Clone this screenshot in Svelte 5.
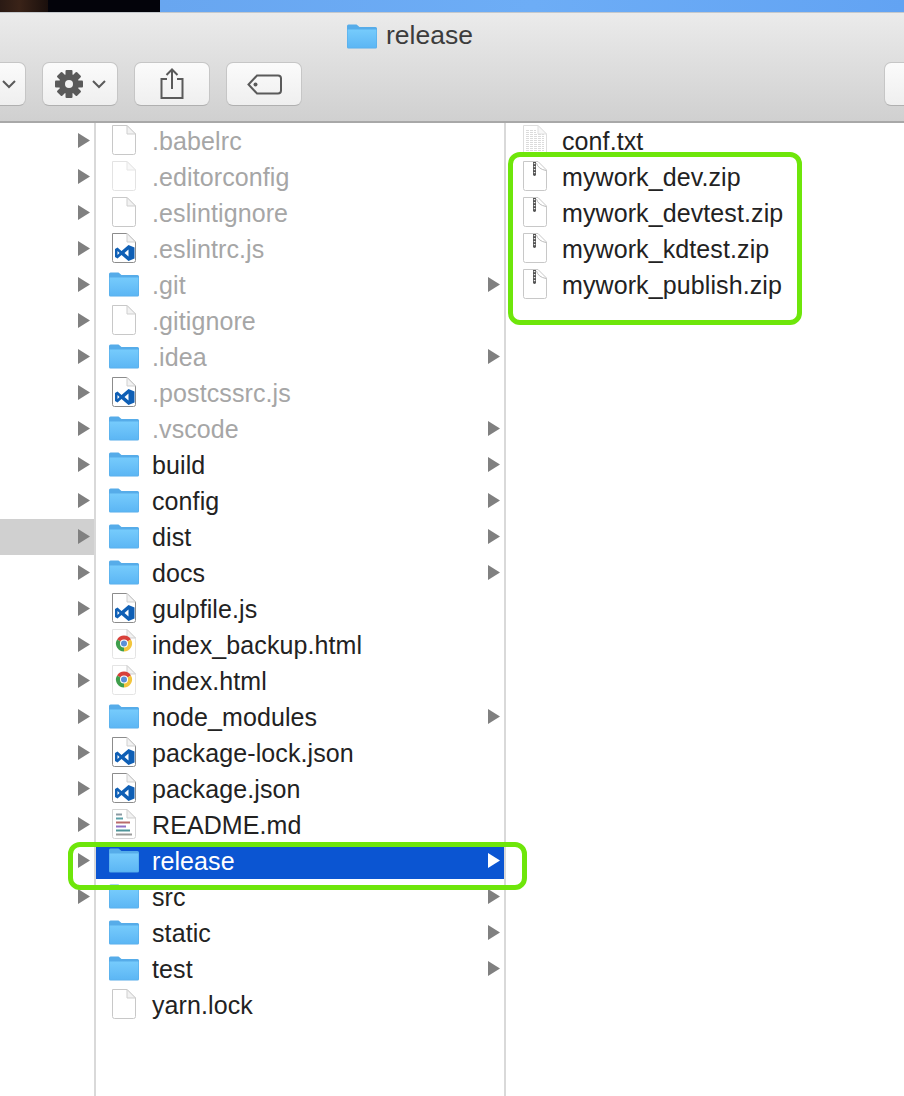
<script>
  const sidebarRows = 22;

  const files = [
    { name: ".babelrc", icon: "file", dim: true },
    { name: ".editorconfig", icon: "file", dim: true, faint: true },
    { name: ".eslintignore", icon: "file", dim: true },
    { name: ".eslintrc.js", icon: "code", dim: true },
    { name: ".git", icon: "folder", dim: true },
    { name: ".gitignore", icon: "file", dim: true },
    { name: ".idea", icon: "folder", dim: true },
    { name: ".postcssrc.js", icon: "code", dim: true },
    { name: ".vscode", icon: "folder", dim: true },
    { name: "build", icon: "folder" },
    { name: "config", icon: "folder" },
    { name: "dist", icon: "folder" },
    { name: "docs", icon: "folder" },
    { name: "gulpfile.js", icon: "code" },
    { name: "index_backup.html", icon: "chrome" },
    { name: "index.html", icon: "chrome" },
    { name: "node_modules", icon: "folder" },
    { name: "package-lock.json", icon: "code" },
    { name: "package.json", icon: "code" },
    { name: "README.md", icon: "readme" },
    { name: "release", icon: "folder", selected: true },
    { name: "src", icon: "folder" },
    { name: "static", icon: "folder" },
    { name: "test", icon: "folder" },
    { name: "yarn.lock", icon: "file" }
  ];

  const releaseFiles = [
    { name: "conf.txt", icon: "text" },
    { name: "mywork_dev.zip", icon: "zip" },
    { name: "mywork_devtest.zip", icon: "zip" },
    { name: "mywork_kdtest.zip", icon: "zip" },
    { name: "mywork_publish.zip", icon: "zip" }
  ];

  const textLines = [6, 8, 10, 12, 14, 16, 18, 20, 22, 24, 26];
  const zipTeeth = [3, 6, 9, 12];
</script>

{#snippet folder()}
  <path d="M0 6Q0 4.5 1.5 4.5H9.5L12.5 7H28.5Q30 7 30 8.5V27Q30 28.5 28.5 28.5H1.5Q0 28.5 0 27Z" fill="#56ace9" />
  <path d="M.6 9.6H29.4V27Q29.4 27.8 28.5 27.8H1.5Q.6 27.8 .6 27Z" fill="url(#folderFill)" />
{/snippet}

{#snippet icon(kind)}
  <svg class="icon {kind}" viewBox="0 0 30 32" width="30" height="32">
    {#if kind === "folder"}
      {@render folder()}
    {:else}
      <path class="page" d="M3.5 1.5H18L26.5 10V28.5Q26.5 30.5 24.5 30.5H5.5Q3.5 30.5 3.5 28.5Z" />
      {#if kind === "zip"}
        <path class="zip-fold" d="M16.5 3Q18 9 26 10.5" />
      {:else}
        <path class="fold" d="M18 1.5V10H26.5Z" />
      {/if}
    {/if}
    {#if kind === "code"}
      <path
        d="M19.5 13L25.5 15.5V26.5L19.5 29L12.5 23L8.5 26.5L6 25V17L8.5 15.5L12.5 19ZM19.5 17.5L15.5 21L19.5 24.5ZM8.5 19V23L10.5 21Z"
        fill="#0f5fb5"
        fill-rule="evenodd"
      />
    {:else if kind === "chrome"}
      <path d="M15 15.5L8.07 11.5A8 8 0 0 1 21.93 11.5Z" fill="#d8403a" />
      <path d="M15 15.5L21.93 11.5A8 8 0 0 1 15 23.5Z" fill="#f2c53d" />
      <path d="M15 15.5L15 23.5A8 8 0 0 1 8.07 11.5Z" fill="#3f9e4c" />
      <circle cx="15" cy="15.5" r="4" fill="#fff" />
      <circle cx="15" cy="15.5" r="3" fill="#5a8fd8" />
    {:else if kind === "readme"}
      <path d="M7 6.5H13" stroke="#8a9aa3" stroke-width="2" />
      <path d="M7 10.5H14" stroke="#5aa0a8" stroke-width="2" />
      <path d="M7 14.5H21" stroke="#b96a6a" stroke-width="2" />
      <path d="M7 18.5H17" stroke="#8f6fc4" stroke-width="2" />
      <path d="M7 22.5H21" stroke="#4f9499" stroke-width="2" />
      <path d="M7 26.5H23" stroke="#9a9a9a" stroke-width="2" />
    {:else if kind === "text"}
      {#each textLines as y}
        <path d="M6 {y}.5H{y < 10 ? 16 : 24}" stroke="#c4c4c4" stroke-width="1" stroke-dasharray="3 1" />
      {/each}
    {:else if kind === "zip"}
      <path d="M13 2H16V15Q14.5 17 13 15Z" fill="#555" />
      {#each zipTeeth as y}
        <rect x="13.8" {y} width="1.5" height="1.2" fill="#eee" />
      {/each}
    {/if}
  </svg>
{/snippet}

{#snippet arrow()}
  <svg class="arrow" viewBox="0 0 12 15" width="12" height="15"><path d="M0 0L12 7.5L0 15Z" /></svg>
{/snippet}

<svg class="defs" width="0" height="0" aria-hidden="true">
  <defs>
    <linearGradient id="folderFill" x1="0" y1="0" x2="0" y2="1">
      <stop offset="0" stop-color="#76cbfc" />
      <stop offset="1" stop-color="#5cb6f4" />
    </linearGradient>
  </defs>
</svg>

<div class="screen">
  <div class="desktop">
    <span class="photo"></span>
    <span class="dark"></span>
    <span class="sky"></span>
  </div>

  <header class="toolbar">
    <div class="title">
      <svg class="icon" viewBox="0 0 30 32" width="30" height="32">{@render folder()}</svg>
      <span>release</span>
    </div>
    <div class="buttons">
      <button class="btn cut-left" aria-label="View options">
        <svg width="14" height="9" viewBox="0 0 14 9"><path class="line" d="M1 1L7 7L13 1" /></svg>
      </button>
      <button class="btn" aria-label="Action">
        <svg width="30" height="30" viewBox="0 0 30 30">
          <g fill="#5a5a5a">
            <rect x="11.5" y="1" width="7" height="28" rx="1" />
            <rect x="11.5" y="1" width="7" height="28" rx="1" transform="rotate(45 15 15)" />
            <rect x="11.5" y="1" width="7" height="28" rx="1" transform="rotate(90 15 15)" />
            <rect x="11.5" y="1" width="7" height="28" rx="1" transform="rotate(135 15 15)" />
            <circle cx="15" cy="15" r="10" />
          </g>
          <circle cx="15" cy="15" r="4" fill="#f2f2f2" />
        </svg>
        <svg width="14" height="9" viewBox="0 0 14 9"><path class="line" d="M1 1L7 7L13 1" /></svg>
      </button>
      <button class="btn" aria-label="Share">
        <svg width="24" height="32" viewBox="0 0 24 32">
          <path class="line" d="M7 11H1.5V30H22.5V11H17M12 21V2M6.5 7L12 1.5L17.5 7" />
        </svg>
      </button>
      <button class="btn" aria-label="Tags">
        <svg width="35" height="21" viewBox="0 0 35 21">
          <path class="line" d="M10 1.5H31Q34 1.5 34 4.5V16.5Q34 19.5 31 19.5H10L1.5 10.5Z" />
          <circle cx="8.5" cy="10.5" r="2" fill="#5a5a5a" />
        </svg>
      </button>
      <button class="btn cut-right" aria-label="Search"></button>
    </div>
  </header>

  <main class="browser">
    <section class="col sidebar">
      {#each { length: sidebarRows } as _, i}
        <div class="row" class:current={i === 11}>{@render arrow()}</div>
      {/each}
    </section>

    <section class="col listing">
      {#each files as f}
        <div class="row" class:dim={f.dim} class:faint={f.faint} class:selected={f.selected}>
          {@render icon(f.icon)}
          <span class="name">{f.name}</span>
          {#if f.icon === "folder"}{@render arrow()}{/if}
        </div>
      {/each}
    </section>

    <section class="col preview">
      {#each releaseFiles as f}
        <div class="row" class:soft={f.icon === "text"}>
          {@render icon(f.icon)}
          <span class="name">{f.name}</span>
        </div>
      {/each}
    </section>
  </main>

  <div class="mark mark-files"></div>
  <div class="mark mark-release"></div>
</div>

<style>
  :global(body) {
    background: #fff;
  }

  .defs {
    position: absolute;
  }

  .screen {
    position: relative;
    width: 904px;
    height: 1096px;
    overflow: hidden;
    font-family: "Liberation Sans", Arial, sans-serif;
    color: #222;
    background: #fff;
  }

  .desktop {
    display: flex;
    height: 12px;
  }

  .photo {
    width: 48px;
    background: linear-gradient(90deg, #2a1a14, #3a2318 40%, #1a0f0c);
  }

  .dark {
    width: 112px;
    background: #03030a;
  }

  .sky {
    flex: 1;
    background: linear-gradient(90deg, #68a6f0, #6dadf6 50%, #62a3f3);
  }

  .toolbar {
    height: 108px;
    border-top: 1px solid #c4c8cc;
    border-bottom: 2px solid #a8a8a8;
    background: linear-gradient(#ebebeb, #d0d0d0);
  }

  .title {
    display: flex;
    align-items: center;
    gap: 9px;
    height: 45px;
    margin-bottom: 4px;
    padding-left: 347px;
    font-size: 26.5px;
    color: #3c3c3c;
  }

  .buttons {
    display: flex;
    gap: 16px;
  }

  .btn {
    display: flex;
    align-items: center;
    justify-content: center;
    gap: 8px;
    width: 76px;
    height: 44px;
    padding: 0;
    border: 1px solid #c6c6c6;
    border-bottom-color: #b0b0b0;
    border-radius: 7px;
    background: linear-gradient(#fbfbfb, #efefef);
  }

  .cut-left {
    margin-left: -50px;
    justify-content: flex-end;
    padding-right: 9px;
  }

  .cut-right {
    margin-left: auto;
    margin-right: -56px;
  }

  .line {
    fill: none;
    stroke: #5a5a5a;
    stroke-width: 2;
  }

  .browser {
    display: grid;
    grid-template-columns: 96px 410px 1fr;
    height: 974px;
  }

  .col {
    box-sizing: border-box;
  }

  .sidebar,
  .listing {
    border-right: 2px solid #d9d9d9;
  }

  .row {
    display: flex;
    align-items: center;
    height: 36px;
    font-size: 25px;
    letter-spacing: 0.1px;
    white-space: nowrap;
  }

  .arrow {
    flex: none;
    margin-top: -1px;
    fill: #808080;
  }

  .sidebar .row {
    justify-content: flex-end;
    padding-right: 4px;
  }

  .sidebar .current {
    background: #d0d0d0;
  }

  .listing .row {
    padding: 0 4px 0 13px;
  }

  .listing .name {
    margin-left: 13px;
  }

  .listing .arrow {
    margin-left: auto;
  }

  .icon {
    flex: none;
  }

  .row .icon {
    margin-top: -2px;
  }

  .dim {
    color: #a6a6a6;
  }

  .faint .icon {
    opacity: 0.5;
  }

  .selected {
    background: #0b55d2;
    color: #fff;
  }

  .selected .arrow {
    fill: #fff;
  }

  .preview .row {
    padding-left: 14px;
  }

  .preview .name {
    margin-left: 12px;
  }

  .soft .icon {
    opacity: 0.6;
  }

  .page {
    fill: #fff;
    stroke: #c8c8c8;
  }

  .fold {
    fill: #f2f2f2;
    stroke: #cfcfcf;
  }

  .zip-fold {
    fill: none;
    stroke: #bdbdbd;
  }

  .code .page {
    stroke: #8c8c8c;
  }

  .chrome .page {
    stroke: #e4e4e4;
  }

  .readme .page {
    stroke: #d4d4d4;
  }

  .mark {
    position: absolute;
    box-sizing: border-box;
    border: 5px solid #6ee60a;
    border-radius: 12px;
  }

  .mark-files {
    left: 508px;
    top: 152px;
    width: 294px;
    height: 173px;
  }

  .mark-release {
    left: 68px;
    top: 842px;
    width: 459px;
    height: 48px;
  }
</style>
